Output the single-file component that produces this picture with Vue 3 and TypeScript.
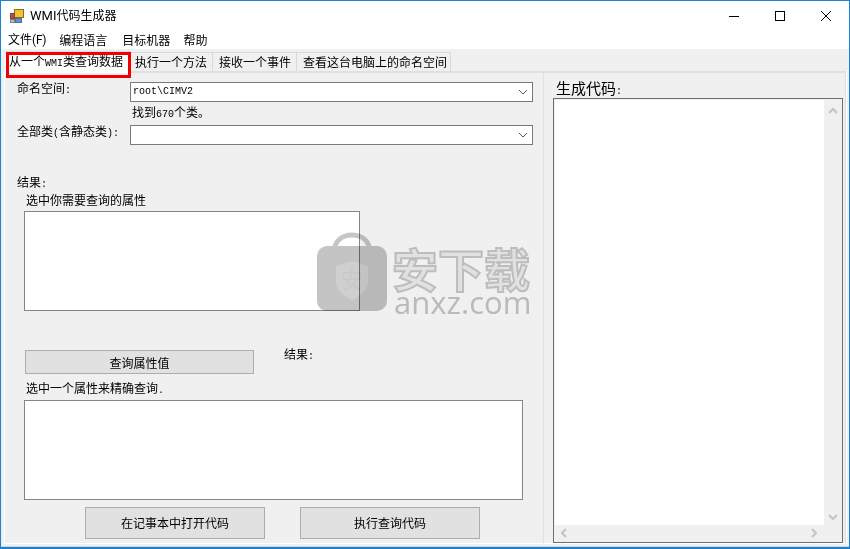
<script setup lang="ts">
const menus: string[] = ['编程语言', '目标机器', '帮助']
const tabs: string[] = ['执行一个方法', '接收一个事件', '查看这台电脑上的命名空间']
</script>

<template>
  <div class="window">
    <header class="titlebar">
      <svg class="appicon" width="16" height="16" viewBox="0 0 16 16">
        <rect x="5.5" y="1.5" width="9" height="8" fill="#f2c230" stroke="#8a6d1c" />
        <rect x="1.5" y="5.5" width="4" height="5" fill="#c8443a" stroke="#6d4b48" />
        <rect x="6.5" y="10.5" width="6" height="4" fill="#5d8fd8" stroke="#5a6d8c" />
        <rect x="1.5" y="11.5" width="4" height="3" fill="#b9bec8" stroke="#7a808c" />
      </svg>
      <span class="title"><span class="titlelatin">WMI</span>代码生成器</span>
      <div class="controls">
        <svg width="12" height="12" viewBox="0 0 12 12" class="ctl"><path d="M1 6.5H11" stroke="#000" fill="none" /></svg>
        <svg width="12" height="12" viewBox="0 0 12 12" class="ctl"><rect x="1.5" y="1.5" width="9" height="9" stroke="#000" fill="none" /></svg>
        <svg width="12" height="12" viewBox="0 0 12 12" class="ctl"><path d="M1 1L11 11M11 1L1 11" stroke="#000" fill="none" /></svg>
      </div>
    </header>

    <nav class="menubar">
      <span class="menu filemenu"><span>文件</span><span class="menulatin">(F)</span></span>
      <span v-for="m in menus" :key="m" class="menu">{{ m }}</span>
    </nav>

    <div class="content">
      <div class="tabstrip">
        <div class="tab active">从一个<span class="m">WMI</span>类查询数据</div>
        <div v-for="t in tabs" :key="t" class="tab">{{ t }}</div>
      </div>

      <main class="page">
        <section class="left">
          <div class="formrow first">
            <label class="fieldlabel">命名空间<span class="m">:</span></label>
            <div class="combo">
              <span class="combotext">root\CIMV2</span>
              <svg class="chev" width="10" height="6" viewBox="0 0 10 6"><path d="M1 1L5 5L9 1" stroke="#555" fill="none" /></svg>
            </div>
          </div>
          <div class="found">找到<span class="m">670</span>个类。</div>
          <div class="formrow second">
            <label class="fieldlabel">全部类<span class="m">(</span>含静态类<span class="m">):</span></label>
            <div class="combo">
              <svg class="chev" width="10" height="6" viewBox="0 0 10 6"><path d="M1 1L5 5L9 1" stroke="#555" fill="none" /></svg>
            </div>
          </div>
          <div class="result-a">结果<span class="m">:</span></div>
          <div class="pick-a">选中你需要查询的属性</div>
          <div class="listbox small-list"></div>
          <div class="actionrow">
            <button class="btn querybtn">查询属性值</button>
            <span class="result-b">结果<span class="m">:</span></span>
          </div>
          <div class="pick-b">选中一个属性来精确查询<span class="m">.</span></div>
          <div class="listbox wide-list"></div>
          <div class="bottomrow">
            <button class="btn bigbtn">在记事本中打开代码</button>
            <button class="btn bigbtn">执行查询代码</button>
          </div>
        </section>

        <section class="right">
          <div class="codelabel">生成代码<span class="m">:</span></div>
          <div class="codebox">
            <div class="codemain">
              <div class="codearea"></div>
              <div class="vbar">
                <svg width="10" height="7" viewBox="0 0 10 7"><path d="M1 6L5 2L9 6" stroke="#c4c4c4" stroke-width="2" fill="none" /></svg>
                <svg width="10" height="7" viewBox="0 0 10 7"><path d="M1 1L5 5L9 1" stroke="#c4c4c4" stroke-width="2" fill="none" /></svg>
              </div>
            </div>
            <div class="hbar">
              <svg width="7" height="10" viewBox="0 0 7 10"><path d="M6 1L2 5L6 9" stroke="#c4c4c4" stroke-width="2" fill="none" /></svg>
              <svg width="7" height="10" viewBox="0 0 7 10"><path d="M1 1L5 5L1 9" stroke="#c4c4c4" stroke-width="2" fill="none" /></svg>
            </div>
          </div>
        </section>
      </main>
    </div>

    <div class="highlight"></div>

    <div class="watermark">
      <svg class="bag" width="72" height="80" viewBox="0 0 72 80">
        <path d="M18 18C20 7 28 3 36 3C44 3 52 7 54 18" stroke="#c6c6c6" stroke-width="5" fill="none" />
        <rect x="1" y="14" width="70" height="65" rx="10" fill="#c4c4c4" />
        <path d="M36 29L52 34V50C52 59 43 65 36 68C29 65 20 59 20 50V34Z" fill="#cfcfcf" />
        <text x="36" y="56" text-anchor="middle" class="bagchar">安</text>
      </svg>
      <div class="wmtext">
        <div class="wmcn">安下载</div>
        <div class="wmen">anxz.com</div>
      </div>
    </div>
  </div>
</template>

<style>
html, body { margin: 0; padding: 0; background: #fff; }
</style>

<style scoped>
.window {
  position: relative;
  box-sizing: border-box;
  width: 850px;
  height: 549px;
  overflow: hidden;
  background: #fff;
  border: 1px solid #1883d7;
  border-bottom-width: 2px;
  font-family: "Noto Sans CJK SC", "Liberation Sans", sans-serif;
  font-size: 12px;
  line-height: 16px;
  color: #000;
}
.m { font-family: "Liberation Mono", monospace; font-size: 10px; }
.titlebar { display: flex; align-items: center; height: 29px; padding-left: 8px; }
.appicon { margin-right: 5px; margin-top: 1px; }
.title { font-size: 12px; }
.titlelatin { font-family: Roboto, sans-serif; font-size: 13px; }
.controls { display: flex; margin-left: auto; margin-top: 1px; }
.ctl { width: 12px; height: 12px; padding: 0 17px; }
.menubar { display: flex; height: 19px; padding-left: 7px; align-items: center; gap: 15px; }
.filemenu { margin-right: -2px; }
.menu:last-child { margin-left: -2px; }
.menulatin { font-family: Roboto, sans-serif; font-size: 12px; letter-spacing: -0.2px; }
.content {
  box-sizing: border-box;
  height: 498px;
  padding-left: 3px;
  background: #f0f0f0;
  border-bottom: 1px solid #d4d4d4;
}
.tabstrip {
  display: flex;
  height: 22px;
  padding: 3px 0 0 1px;
  box-sizing: border-box;
}
.tab {
  box-sizing: border-box;
  height: 19px;
  padding: 1px 5px 0 6px;
  line-height: 16px;
  background: #f0f0f0;
  border: 1px solid #d9d9d9;
  border-bottom: none;
  border-left: none;
  white-space: nowrap;
}
.tab:last-child { padding-right: 3px; }
.tab.active {
  width: 126px;
  height: 22px;
  padding-left: 4px;
  margin-right: -2px;
  margin-top: -1px;
  background: #fff;
  z-index: 1;
}
.page {
  display: flex;
  box-sizing: border-box;
  width: 842px;
  height: 473px;
  background: #f0f0f0;
  border-style: solid;
  border-width: 2px 1px 1px 1px;
  border-color: #e0e0e0 #dcdcdc #fff #fff;
  box-shadow: 1px 0 0 #fff;
}
.left { width: 539px; flex: none; padding-left: 12px; box-sizing: border-box; border-right: 1px solid #e0e0e0; }
.formrow { display: flex; }
.formrow.first { margin-top: 9px; }
.formrow.second { margin-top: 2px; }
.fieldlabel { width: 113px; flex: none; margin-top: -2px; }
.combo {
  display: flex;
  align-items: center;
  box-sizing: border-box;
  width: 403px;
  height: 20px;
  padding: 0 4px 0 2px;
  background: #fff;
  border: 1px solid #7a7a7a;
}
.combotext { font-family: "Liberation Mono", monospace; font-size: 10px; }
.chev { margin-left: auto; }
.found { margin: 2px 0 0 115px; line-height: 16px; }
.result-a { margin-top: 29px; }
.pick-a { margin: -1px 0 0 9px; }
.listbox { box-sizing: border-box; background: #fff; border: 1px solid #82858f; margin-left: 7px; }
.small-list { width: 336px; height: 100px; margin-top: 3px; }
.actionrow { display: flex; margin: 39px 0 0 8px; height: 24px; }
.btn {
  box-sizing: border-box;
  padding: 0;
  background: #e1e1e1;
  border: 1px solid #adadad;
  font: inherit;
  color: #000;
}
.querybtn { width: 229px; height: 24px; padding-top: 2px; }
.result-b { margin: -4px 0 0 30px; }
.pick-b { margin: 6px 0 0 9px; }
.wide-list { width: 499px; height: 100px; margin-top: 1px; }
.bottomrow { display: flex; gap: 35px; margin: 7px 0 0 68px; }
.bigbtn { width: 180px; height: 32px; }
.right { flex: 1; padding-left: 9px; }
.codelabel { font-size: 15px; line-height: 16px; margin: 7px 0 0 3px; height: 18px; white-space: nowrap; }
.codebox {
  display: flex;
  flex-direction: column;
  box-sizing: border-box;
  width: 290px;
  height: 445px;
  padding: 1px;
  background: #f0f0f0;
  border: 1px solid #6e6e6e;
}
.codemain { display: flex; flex: 1; min-height: 0; }
.codearea { flex: 1; background: #fff; }
.vbar {
  display: flex;
  flex-direction: column;
  justify-content: space-between;
  align-items: center;
  width: 17px;
  padding: 7px 0 4px;
  box-sizing: border-box;
  background: #f0f0f0;
}
.hbar {
  display: flex;
  justify-content: space-between;
  align-items: center;
  height: 16px;
  padding: 0 23px 0 5px;
  background: #f0f0f0;
}
.highlight {
  position: absolute;
  left: 5px;
  top: 51px;
  z-index: 2;
  width: 125px;
  height: 26px;
  box-sizing: border-box;
  border: 3px solid #f00000;
  pointer-events: none;
}
.watermark {
  position: absolute;
  left: 315px;
  top: 231px;
  z-index: 2;
  display: flex;
  pointer-events: none;
  mix-blend-mode: multiply;
}
.bagchar { font-size: 22px; fill: #c8c8c8; }
.wmtext { margin-left: 4px; width: 140px; }
.wmcn {
  font-size: 46px;
  line-height: 40px;
  margin-top: 15px;
  font-weight: 700;
  color: #f0f0f0;
  -webkit-text-stroke: 2px #c9c9c9;
  white-space: nowrap;
}
.wmen {
  font-family: "Open Sans", sans-serif;
  font-size: 31px;
  line-height: 24px;
  margin-top: 3px;
  color: #c6c6c6;
  margin-left: 2px;
}
</style>
